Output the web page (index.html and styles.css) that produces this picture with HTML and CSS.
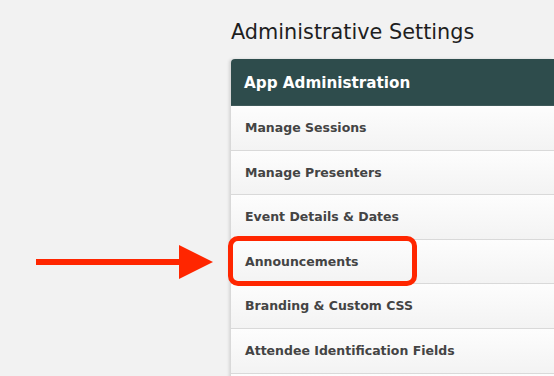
FILE: index.html
```html
<!DOCTYPE html>
<html lang="en">
<head>
    <meta charset="UTF-8">
    <meta name="viewport" content="width=device-width, initial-scale=1.0">
    <title>Administrative Settings</title>
    <link rel="stylesheet" href="styles.css">
</head>
<body>
    <div class="page">
        <div class="settings">
            <h1>Administrative Settings</h1>
            <div class="panel">
                <div class="panel-header">App Administration</div>
                <ul class="panel-list">
                    <li>Manage Sessions</li>
                    <li>Manage Presenters</li>
                    <li>Event Details &amp; Dates</li>
                    <li class="highlight">Announcements</li>
                    <li>Branding &amp; Custom CSS</li>
                    <li>Attendee Identification Fields</li>
                    <li></li>
                </ul>
            </div>
        </div>

        <!-- annotation arrow pointing at the highlighted row -->
        <svg class="callout-arrow" width="178" height="34" viewBox="0 0 178 34">
            <rect x="0" y="14" width="146" height="6" fill="#ff2600"/>
            <polygon points="143,0 177,17 143,34" fill="#ff2600"/>
        </svg>
    </div>
</body>
</html>
```

FILE: styles.css
```css
body {
    margin: 0;
    background: #f2f2f2;
    font-family: "DejaVu Sans", "Liberation Sans", sans-serif;
    overflow: hidden;
}
.page {
    position: relative;
    height: 376px;
    overflow: hidden;
}
.settings {
    margin-left: 231px;
    padding-top: 20px;
}
.settings h1 {
    margin: 0 0 14px 0;
    font-size: 20.8px;
    font-weight: normal;
    color: #1e1e1e;
    line-height: 25px;
}
.panel {
    box-shadow: -2px 0 3px rgba(0,0,0,0.12);
    border-top-left-radius: 4px;
}
.panel-header {
    background: #2e4c4c;
    color: #fff;
    font-weight: bold;
    font-size: 15.2px;
    height: 47px;
    line-height: 48px;
    padding-left: 13px;
    border-top-left-radius: 4px;
    border-bottom: 1px solid #3f5a5a;
    box-sizing: border-box;
}
.panel-list {
    list-style: none;
    margin: 0;
    padding: 0;
}
.panel-list li {
    box-sizing: border-box;
    height: 44.6px;
    line-height: 44px;
    padding-left: 14px;
    font-size: 12.5px;
    font-weight: bold;
    color: #444;
    background: linear-gradient(#fdfdfd, #f3f3f3);
    border-bottom: 1.5px solid #d9d9d9;
}
.panel-list li.highlight {
    position: relative;
}
.panel-list li.highlight::after {
    content: "";
    position: absolute;
    left: -3px;
    top: -4px;
    width: 189px;
    height: 50px;
    box-sizing: border-box;
    border: 5px solid #ff2600;
    border-radius: 10px;
}
.callout-arrow {
    position: absolute;
    left: 36px;
    top: 245px;
}
```
